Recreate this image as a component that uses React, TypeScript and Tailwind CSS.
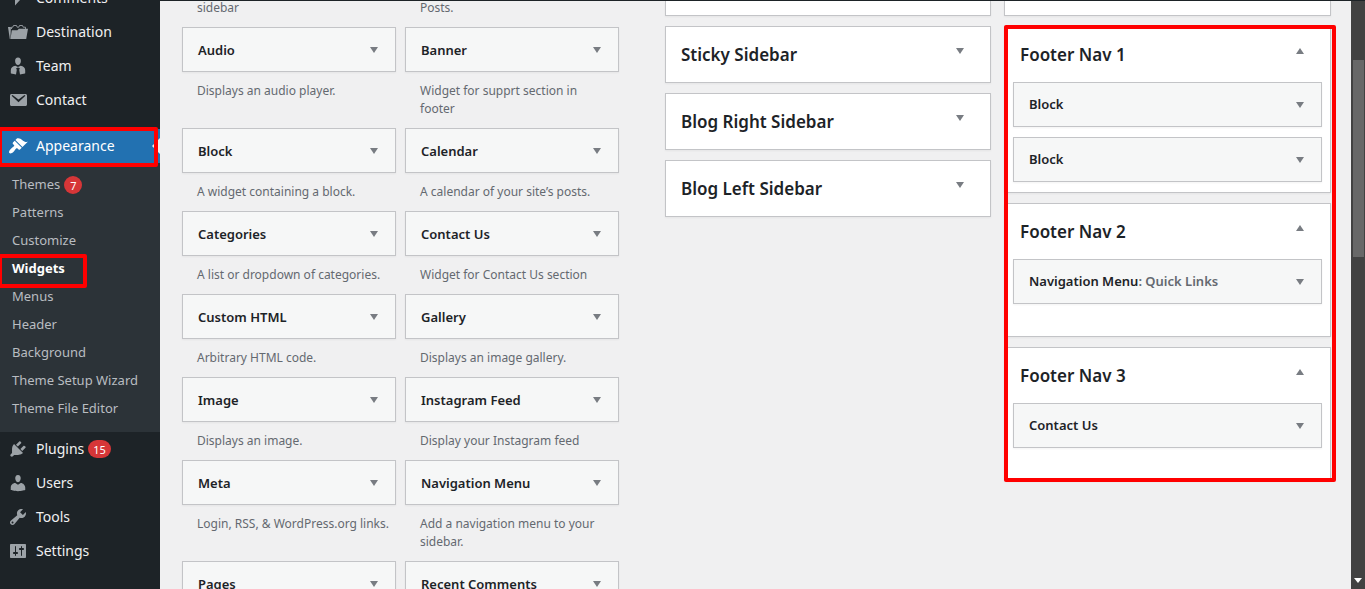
import { ReactNode } from "react";
import clsx from "clsx";

const icons: Record<string, ReactNode> = {
  comments: <path d="M5 2h9c1.100 0 2 .9 2 2v6c0 1.100-.9 2-2 2h-2l-5 5.500V12H5c-1.100 0-2-.9-2-2V4c0-1.100.9-2 2-2z" />,
  folder: (
    <>
      <path d="M0 5h2.800v3L2.400 17H1.800z" />
      <path
        d="M3.500 7V5.200h1.300l.7-1.700h3l.7 1.700h1.600l.7-1.700h3l.7 1.700h2.300V7"
        fill="none"
        stroke="currentColor"
        strokeWidth="0.9"
      />
      <path d="M3.800 8.200h5.600L10.800 6.800H20L18.200 17H2.500z" />
    </>
  ),
  businessman: (
    <path d="M10 1.600c1.900 0 2.900 1.500 2.900 3.400S11.700 9 10 9 7.100 6.900 7.100 5 8.100 1.600 10 1.600zM7.300 9.700L10 11l2.700-1.300c2.600.3 4.500 2 4.500 4.500v3.100s-1.800.9-5.200 1.100l-.8-4.700.7-1.500-1.900-.6-1.900.6.7 1.500-.8 4.700c-3.400-.2-5.200-1.100-5.200-1.100v-3.100c0-2.500 1.900-4.200 4.500-4.500z" />
  ),
  email: (
    <path
      fillRule="evenodd"
      d="M3.500 4h14c.8 0 1.500.7 1.500 1.500v9c0 .8-.7 1.500-1.500 1.500h-14c-.8 0-1.500-.7-1.500-1.500v-9C2 4.700 2.700 4 3.500 4zM3.600 5.700l6.900 6.500 6.900-6.500-.9-.6-6 4.400-6-4.400z"
    />
  ),
  appearance: (
    <path d="M14.480 11.060L7.410 3.990l1.500-1.500c.5-.56 2.300-.47 3.510.32 1.210.8 1.430 1.280 2.910 2.100 1.180.64 2.450 1.260 4.450.85zm-.71.71L6.700 4.700 4.930 6.470c-.39.39-.39 1.020 0 1.410l1.060 1.060c.39.39.39 1.030 0 1.420-.6.6-1.430 1.110-2.210 1.690-.35.26-.7.53-1.010.84C1.430 14.230.4 16.080 1.400 17.070c.99 1 2.840-.03 4.180-1.360.31-.31.58-.66.85-1.020.57-.78 1.080-1.610 1.690-2.210.39-.39 1.020-.39 1.410 0l1.060 1.060c.39.39 1.020.39 1.410 0z" />
  ),
  plugins: (
    <path d="M13.110 4.360L9.870 7.600 8 5.730l3.240-3.240c.35-.34 1.050-.2 1.560.32.52.51.66 1.210.31 1.550zm-8 1.770l.91-1.120 9.010 9.010-1.190.84c-.71.71-2.630 1.160-3.820 1.160H6.140L4.900 17.260c-.59.59-1.540.59-2.120 0-.59-.58-.59-1.530 0-2.120l1.240-1.240v-3.880c0-1.130.4-3.190 1.090-3.890zm7.260 3.970l3.240-3.240c.34-.35 1.040-.21 1.550.31.52.51.66 1.210.31 1.550l-3.240 3.250z" />
  ),
  users: (
    <path d="M10 9.250c-2.270 0-2.730-3.440-2.730-3.440C7 4.020 7.820 2 9.970 2c2.160 0 2.980 2.020 2.710 3.810 0 0-.41 3.440-2.680 3.440zm0 2.570L12.720 10c2.390 0 4.520 2.330 4.520 4.530v2.490s-3.650 1.130-7.240 1.130c-3.650 0-7.240-1.130-7.240-1.130v-2.490c0-2.250 1.940-4.480 4.470-4.480z" />
  ),
  tools: (
    <path d="M16.680 9.770c-1.340 1.340-3.300 1.670-4.950.99l-5.410 6.520c-.99.99-2.590.99-3.580 0s-.99-2.590 0-3.570l6.520-5.420c-.68-1.650-.35-3.610.99-4.950 1.280-1.280 3.120-1.620 4.720-1.060l-2.890 2.890 2.820 2.820 2.860-2.870c.53 1.580.18 3.390-1.080 4.650zM3.810 16.210c.4.39 1.040.39 1.430 0 .4-.4.4-1.040 0-1.430-.39-.4-1.030-.4-1.430 0-.39.39-.39 1.030 0 1.430z" />
  ),
  settings: (
    <path d="M18 16V4c0-.55-.45-1-1-1H3c-.55 0-1 .45-1 1v12c0 .55.45 1 1 1h14c.55 0 1-.45 1-1zM8 11h1c.55 0 1 .45 1 1s-.45 1-1 1H8v1.500c0 .28-.22.5-.5.5s-.5-.22-.5-.5V13H6c-.55 0-1-.45-1-1s.45-1 1-1h1V5.500c0-.28.22-.5.5-.5s.5.22.5.5V11zm5-2h-1c-.55 0-1-.45-1-1s.45-1 1-1h1V5.500c0-.28.22-.5.5-.5s.5.22.5.5V7h1c.55 0 1 .45 1 1s-.45 1-1 1h-1v5.500c0 .28-.22.5-.5.5s-.5-.22-.5-.5V9z" />
  ),
};

const topMenu = [
  { label: "Comments", icon: "comments" },
  { label: "Destination", icon: "folder" },
  { label: "Team", icon: "businessman" },
  { label: "Contact", icon: "email" },
];

const bottomMenu = [
  { label: "Plugins", icon: "plugins", count: 15 },
  { label: "Users", icon: "users" },
  { label: "Tools", icon: "tools" },
  { label: "Settings", icon: "settings" },
];

const submenu = [
  { label: "Themes", count: 7 },
  { label: "Patterns" },
  { label: "Customize" },
  { label: "Widgets", current: true },
  { label: "Menus" },
  { label: "Header" },
  { label: "Background" },
  { label: "Theme Setup Wizard" },
  { label: "Theme File Editor" },
];

const available = [
  { title: "Audio", description: "Displays an audio player." },
  { title: "Banner", description: "Widget for supprt section in\nfooter" },
  { title: "Block", description: "A widget containing a block." },
  { title: "Calendar", description: "A calendar of your site’s posts." },
  { title: "Categories", description: "A list or dropdown of categories." },
  { title: "Contact Us", description: "Widget for Contact Us section" },
  { title: "Custom HTML", description: "Arbitrary HTML code." },
  { title: "Gallery", description: "Displays an image gallery." },
  { title: "Image", description: "Displays an image." },
  { title: "Instagram Feed", description: "Display your Instagram feed" },
  { title: "Meta", description: "Login, RSS, & WordPress.org links." },
  { title: "Navigation Menu", description: "Add a navigation menu to your\nsidebar." },
  { title: "Pages" },
  { title: "Recent Comments" },
];

const sidebars = ["Sticky Sidebar", "Blog Right Sidebar", "Blog Left Sidebar"];

const footers = [
  { title: "Footer Nav 1", widgets: [{ title: "Block" }, { title: "Block" }] },
  { title: "Footer Nav 2", widgets: [{ title: "Navigation Menu", name: "Quick Links" }] },
  { title: "Footer Nav 3", widgets: [{ title: "Contact Us" }] },
];

function Arrow({ up }: { up?: boolean }) {
  return (
    <svg width="8" height="6" viewBox="0 0 8 6" className={clsx("shrink-0 fill-[#787c82]", up && "rotate-180")}>
      <path d="M0 0h8L4 6z" />
    </svg>
  );
}

function Highlight({ className }: { className: string }) {
  return <div className={clsx("pointer-events-none absolute z-10 rounded-xs border-4 border-[#ff0000]", className)} />;
}

function Badge({ count }: { count: number }) {
  return (
    <span className="flex h-[18px] min-w-[18px] items-center justify-center rounded-full bg-[#d63638] px-[5px] text-[11px] leading-none text-white">
      {count}
    </span>
  );
}

function MenuLink({ label, icon, count, active }: { label: string; icon: string; count?: number; active?: boolean }) {
  return (
    <a
      href="#"
      className={clsx(
        "flex h-[34px] items-center gap-2 pl-2 text-sm",
        active ? "bg-[#2271b1] text-white" : "text-[#f0f0f1]"
      )}
    >
      <svg
        viewBox="0 0 20 20"
        className={clsx("h-5 w-5 shrink-0 fill-current", active ? "text-white" : "text-[#9ca2a7]")}
      >
        {icons[icon]}
      </svg>
      <span className="flex items-center gap-1">
        {label}
        {count && <Badge count={count} />}
      </span>
    </a>
  );
}

function Sidebar() {
  return (
    <nav className="w-40 shrink-0 bg-[#1d2327]">
      <div className="-mt-5">
        {topMenu.map((item) => (
          <MenuLink key={item.label} {...item} />
        ))}
      </div>
      <div className="relative mt-3">
        <MenuLink label="Appearance" icon="appearance" active />
        <div className="absolute top-[9px] right-0 border-8 border-l-0 border-transparent border-r-[#f0f0f1]" />
        <Highlight className="-top-0.5 right-0.5 -bottom-1 -left-0.5" />
      </div>
      <ul className="bg-[#2c3338] pt-2 pb-[9px]">
        {submenu.map((item) => (
          <li key={item.label} className="relative">
            <a
              href="#"
              className={clsx(
                "flex h-7 items-center gap-1 pl-3 text-[13px]",
                item.current ? "font-bold text-white" : "text-[#b9bdc1]"
              )}
            >
              {item.label}
              {item.count && <Badge count={item.count} />}
            </a>
            {item.current && <Highlight className="-top-px -bottom-[5px] -left-0.5 w-[89px]" />}
          </li>
        ))}
      </ul>
      {bottomMenu.map((item) => (
        <MenuLink key={item.label} {...item} />
      ))}
    </nav>
  );
}

function Widget({ title, name }: { title: string; name?: string }) {
  return (
    <button className="flex h-[45px] w-full items-center justify-between border border-[#c3c4c7] bg-[#f6f7f7] pr-[17px] pl-[15px] text-left text-[13px] font-semibold text-[#1d2327] shadow-xs">
      <span>
        {title}
        {name && <span className="text-[#646970]">: {name}</span>}
      </span>
      <Arrow />
    </button>
  );
}

function Panel({ title, open, children }: { title: string; open?: boolean; children?: ReactNode }) {
  return (
    <section className={clsx("border border-[#c3c4c7] bg-white px-2 shadow-xs", open && "min-h-[134px]")}>
      <button className="flex h-[55px] w-full items-center justify-between pr-[18px] pl-[7px] text-left">
        <span className="text-[17px] font-semibold text-[#1d2327]">{title}</span>
        <span className="pb-2">
          <Arrow up={open} />
        </span>
      </button>
      {children && <div className="flex flex-col gap-[10px] pb-[10px]">{children}</div>}
    </section>
  );
}

function PreviousPanel() {
  return <div className="h-[15px] shrink-0 border border-t-0 border-[#c3c4c7] bg-white shadow-xs" />;
}

export default function App() {
  return (
    <div className="flex h-screen flex-col overflow-hidden bg-[#f0f0f1] font-['Noto_Sans',sans-serif]">
      <div className="h-px shrink-0 bg-[#1d2327]" />
      <div className="flex min-h-0 flex-1">
        <Sidebar />
        <main className="grid min-w-0 flex-1 grid-cols-[437fr_666fr] gap-x-[46px] overflow-hidden pr-5 pl-[22px]">
          <div className="-mt-0.5 grid grid-cols-2 content-start gap-x-[9px] text-xs leading-[18px] text-[#646970]">
            <p className="pb-[10px] pl-[15px]">sidebar</p>
            <p className="pb-[10px] pl-[15px]">Posts.</p>
            {available.map((item) => (
              <div key={item.title}>
                <Widget title={item.title} />
                <p className="pt-[10px] pb-[10px] pl-[15px] whitespace-pre-line">{item.description}</p>
              </div>
            ))}
          </div>
          <div className="grid grid-cols-[326fr_327fr] items-start gap-x-[13px]">
            <div className="flex flex-col gap-[10px]">
              <PreviousPanel />
              {sidebars.map((title) => (
                <Panel key={title} title={title} />
              ))}
            </div>
            <div className="flex flex-col gap-[10px]">
              <PreviousPanel />
              <div className="relative flex flex-col gap-[10px]">
                {footers.map((footer) => (
                  <Panel key={footer.title} title={footer.title} open>
                    {footer.widgets.map((widget, i) => (
                      <Widget key={i} {...widget} />
                    ))}
                  </Panel>
                ))}
                <Highlight className="-top-px -right-[5px] -bottom-px left-0" />
              </div>
            </div>
          </div>
        </main>
        <div className="flex w-3.5 shrink-0 flex-col items-center justify-between bg-[#424242] pt-[59px] pb-1.5">
          <div className="h-[197px] w-[11px] bg-[#686868]" />
          <svg width="8" height="5" viewBox="0 0 8 5" className="fill-white">
            <path d="M0 0h8L4 5z" />
          </svg>
        </div>
      </div>
    </div>
  );
}
